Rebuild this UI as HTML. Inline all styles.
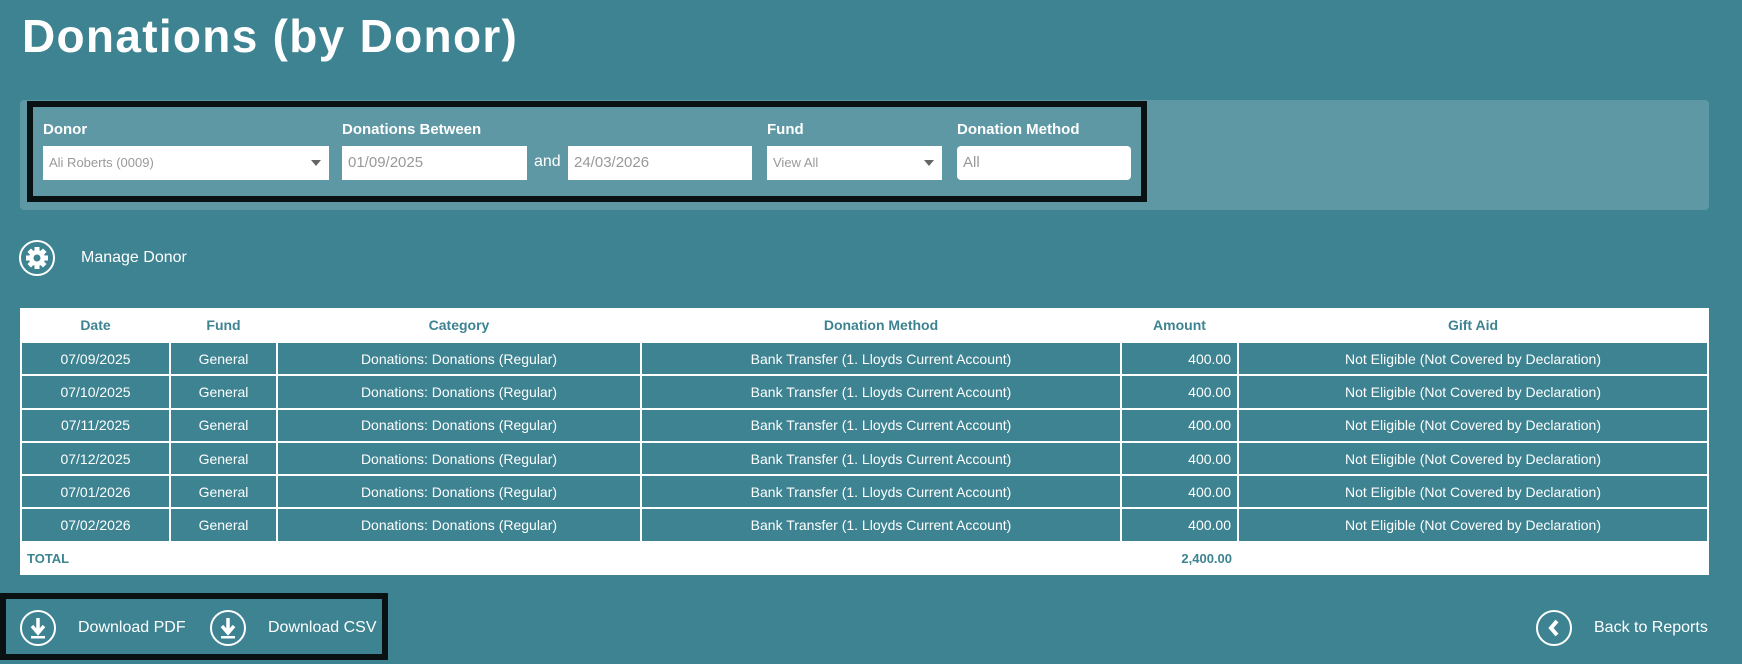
<!DOCTYPE html>
<html><head><meta charset="utf-8">
<style>
*{box-sizing:border-box;margin:0;padding:0}
body{width:1742px;height:664px;background:#3d8391;font-family:"Liberation Sans",sans-serif;color:#fff;position:relative;overflow:hidden}
.abs{position:absolute}
h1{position:absolute;left:22px;top:9px;font-size:46px;font-weight:bold;letter-spacing:1.3px}
.panel{left:20px;top:100px;width:1689px;height:110px;background:#5e98a4;border-radius:4px}
.blk{left:27px;top:101px;width:1120px;height:101px;border:6px solid #0a1112}
.lbl{font-size:15px;font-weight:bold;top:121px}
.inp{top:146px;height:34px;background:#fff;color:#999;font-size:15px;padding:8px 6px;line-height:18px}
.sm{font-size:13px}
.arr{position:absolute;right:8px;top:14px;width:0;height:0;border-left:5px solid transparent;border-right:5px solid transparent;border-top:6px solid #666}
table{position:absolute;left:20px;top:308px;width:1689px;border-collapse:collapse;background:#fff;font-size:14px}
th{height:34px;color:#3d8391;font-weight:bold;font-size:14px}
td{height:33.3px;background:#3d8391;border:2px solid #fff;text-align:center;color:#fff}
td.r{text-align:right;padding-right:6px}
tr.tot td{background:#fff;color:#3d8391;font-weight:bold;border:none;height:33px;font-size:13px}
.ic{width:36px;height:36px;border:2px solid #fff;border-radius:50%}
.t16{font-size:16px}
</style></head><body>
<h1>Donations (by Donor)</h1>
<div class="abs panel"></div>
<div class="abs blk"></div>
<div class="abs lbl" style="left:43px">Donor</div>
<div class="abs lbl" style="left:342px">Donations Between</div>
<div class="abs lbl" style="left:767px">Fund</div>
<div class="abs lbl" style="left:957px">Donation Method</div>
<div class="abs inp sm" style="left:43px;width:286px">Ali Roberts (0009)<span class="arr"></span></div>
<div class="abs inp" style="left:342px;width:185px">01/09/2025</div>
<div class="abs t16" style="left:534px;top:153px">and</div>
<div class="abs inp" style="left:568px;width:184px">24/03/2026</div>
<div class="abs inp sm" style="left:767px;width:175px">View All<span class="arr"></span></div>
<div class="abs inp" style="left:957px;width:174px;border-radius:4px">All</div>

<div class="abs ic" style="left:19px;top:240px"><svg width="32" height="32" viewBox="0 0 32 32"><g fill="#fff" transform="translate(16 16)"><circle r="8"/><g id="t"><rect x="-2.5" y="-11" width="5" height="5"/></g><use href="#t" transform="rotate(45)"/><use href="#t" transform="rotate(90)"/><use href="#t" transform="rotate(135)"/><use href="#t" transform="rotate(180)"/><use href="#t" transform="rotate(225)"/><use href="#t" transform="rotate(270)"/><use href="#t" transform="rotate(315)"/></g><circle cx="16" cy="16" r="3.5" fill="#3d8391"/></svg></div>
<div class="abs t16" style="left:81px;top:249px">Manage Donor</div>

<table>
<tr><th style="width:149px">Date</th><th style="width:107px">Fund</th><th style="width:364px">Category</th><th style="width:480px">Donation Method</th><th style="width:117px">Amount</th><th>Gift Aid</th></tr>
<tr><td>07/09/2025</td><td>General</td><td>Donations: Donations (Regular)</td><td>Bank Transfer (1. Lloyds Current Account)</td><td class="r">400.00</td><td>Not Eligible (Not Covered by Declaration)</td></tr>
<tr><td>07/10/2025</td><td>General</td><td>Donations: Donations (Regular)</td><td>Bank Transfer (1. Lloyds Current Account)</td><td class="r">400.00</td><td>Not Eligible (Not Covered by Declaration)</td></tr>
<tr><td>07/11/2025</td><td>General</td><td>Donations: Donations (Regular)</td><td>Bank Transfer (1. Lloyds Current Account)</td><td class="r">400.00</td><td>Not Eligible (Not Covered by Declaration)</td></tr>
<tr><td>07/12/2025</td><td>General</td><td>Donations: Donations (Regular)</td><td>Bank Transfer (1. Lloyds Current Account)</td><td class="r">400.00</td><td>Not Eligible (Not Covered by Declaration)</td></tr>
<tr><td>07/01/2026</td><td>General</td><td>Donations: Donations (Regular)</td><td>Bank Transfer (1. Lloyds Current Account)</td><td class="r">400.00</td><td>Not Eligible (Not Covered by Declaration)</td></tr>
<tr><td>07/02/2026</td><td>General</td><td>Donations: Donations (Regular)</td><td>Bank Transfer (1. Lloyds Current Account)</td><td class="r">400.00</td><td>Not Eligible (Not Covered by Declaration)</td></tr>
<tr class="tot"><td style="text-align:left;padding-left:6px">TOTAL</td><td></td><td></td><td></td><td class="r">2,400.00</td><td></td></tr>
</table>

<div class="abs" style="left:0;top:593px;width:388px;height:67px;border:6px solid #0a1112"></div>
<div class="abs ic" style="left:20px;top:610px"><svg width="32" height="32" viewBox="0 0 32 32"><path d="M16 6v14M10 14l6 7 6-7" stroke="#fff" stroke-width="3.5" fill="none"/><rect x="9" y="24" width="14" height="2.5" fill="#fff"/></svg></div>
<div class="abs t16" style="left:78px;top:619px">Download PDF</div>
<div class="abs ic" style="left:210px;top:610px"><svg width="32" height="32" viewBox="0 0 32 32"><path d="M16 6v14M10 14l6 7 6-7" stroke="#fff" stroke-width="3.5" fill="none"/><rect x="9" y="24" width="14" height="2.5" fill="#fff"/></svg></div>
<div class="abs t16" style="left:268px;top:619px">Download CSV</div>
<div class="abs ic" style="left:1536px;top:610px"><svg width="32" height="32" viewBox="0 0 32 32"><path d="M19 9l-6 7 6 7" stroke="#fff" stroke-width="4" fill="none"/></svg></div>
<div class="abs t16" style="left:1594px;top:619px">Back to Reports</div>
</body></html>
